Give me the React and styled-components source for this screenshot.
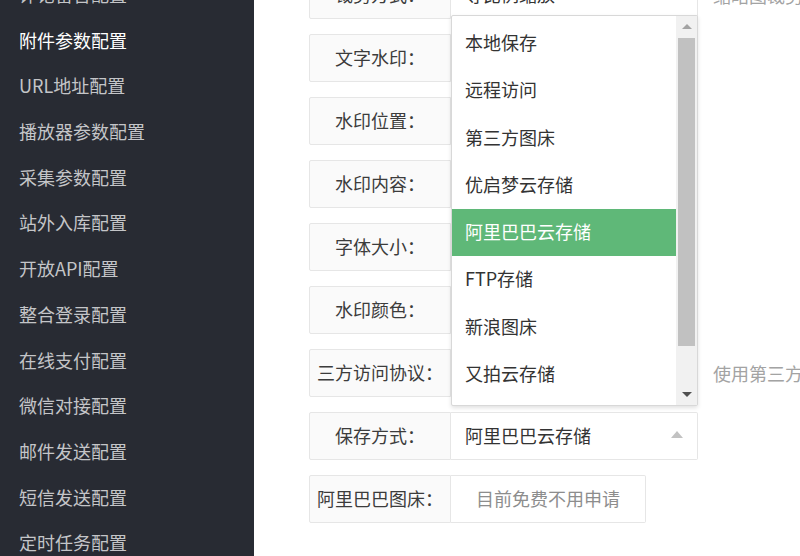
import React from 'react';
import styled, { createGlobalStyle } from 'styled-components';

const GlobalStyle = createGlobalStyle`
  html, body {
    margin: 0;
    padding: 0;
    height: 556px;
    overflow: hidden;
    background: #fff;
    font-family: "Noto Sans CJK SC", "Noto Sans", sans-serif;
  }
`;

const Page = styled.div`
  display: flex;
  width: 800px;
  height: 556px;
  overflow: hidden;
`;

const Side = styled.aside`
  width: 254px;
  flex-shrink: 0;
  background-color: #282b33;
  overflow: hidden;
`;

const NavList = styled.ul`
  list-style: none;
  margin: -28px 0 0;
  padding: 0;
`;

const NavItem = styled.li`
  height: 45.7px;
  line-height: 45.7px;
  padding-left: 19px;
  font-size: 18px;
  color: ${(p) => (p.$active ? '#ffffff' : '#c4c5c8')};
  white-space: nowrap;
`;

const Main = styled.main`
  flex: 1;
  padding-left: 55px;
  overflow: hidden;
`;

const Form = styled.div`
  display: flex;
  flex-direction: column;
  gap: 15px;
  margin-top: -29px;
`;

const Row = styled.div`
  display: flex;
  align-items: center;
  height: 48px;
`;

const Label = styled.label`
  flex-shrink: 0;
  width: 142px;
  height: 48px;
  box-sizing: border-box;
  border: 1px solid #e6e6e6;
  border-radius: 2px 0 0 2px;
  background-color: #fafafa;
  color: #3c3c3c;
  font-size: 18px;
  line-height: 45px;
  text-align: center;
  white-space: nowrap;
`;

const Field = styled.div`
  position: relative;
  flex-shrink: 0;
  width: ${(p) => p.$width || 247}px;
  height: 48px;
  box-sizing: border-box;
  border: 1px solid #e6e6e6;
  border-left: none;
  border-radius: 0 2px 2px 0;
  background-color: #fff;
  color: ${(p) => (p.$placeholder ? '#8d8d8d' : '#333')};
  font-size: 18px;
  line-height: 45px;
  padding-left: 14px;
  text-align: ${(p) => (p.$center ? 'center' : 'left')};
  padding-right: ${(p) => (p.$center ? '14px' : '0')};
  white-space: nowrap;
`;

const Caret = styled.i`
  position: absolute;
  right: 14px;
  top: 50%;
  width: 0;
  height: 0;
  border-left: 6px solid transparent;
  border-right: 6px solid transparent;
  ${(p) =>
    p.$up
      ? 'border-bottom: 7px solid #c2c2c2; margin-top: -5px;'
      : 'border-top: 7px solid #c2c2c2; margin-top: -3px;'}
`;

const Aux = styled.div`
  margin-left: 15px;
  color: #a3a3a3;
  font-size: 18px;
  white-space: nowrap;
`;

const Dropdown = styled.div`
  position: absolute;
  left: 0;
  bottom: calc(100% + 7px);
  z-index: 10;
  width: 247px;
  height: 391px;
  box-sizing: border-box;
  display: flex;
  border: 1px solid #d8d8d8;
  border-radius: 2px;
  background-color: #fff;
  box-shadow: 0 2px 4px rgba(0, 0, 0, 0.12);
`;

const Options = styled.dl`
  flex: 1;
  margin: 0;
  padding: 4px 0 0;
  overflow: hidden;
`;

const Option = styled.dd`
  margin: 0;
  height: 47.25px;
  line-height: 45px;
  padding-left: 13px;
  font-size: 18px;
  white-space: nowrap;
  color: ${(p) => (p.$selected ? '#fff' : '#333')};
  background-color: ${(p) => (p.$selected ? '#5fb878' : 'transparent')};
`;

const Scrollbar = styled.div`
  width: 21px;
  display: flex;
  flex-direction: column;
  background-color: #f1f1f1;
`;

const ScrollButton = styled.div`
  height: 21px;
  display: flex;
  align-items: center;
  justify-content: center;

  &::before {
    content: '';
    width: 0;
    height: 0;
    border-left: 5px solid transparent;
    border-right: 5px solid transparent;
    ${(p) =>
      p.$down
        ? 'border-top: 5px solid #505050;'
        : 'border-bottom: 5px solid #a3a3a3;'}
  }
`;

const Track = styled.div`
  flex: 1;
  padding: 1px 2px 0;
`;

const Thumb = styled.div`
  height: 308px;
  background-color: #c1c1c1;
`;

const menu = [
  '评论留言配置',
  '附件参数配置',
  'URL地址配置',
  '播放器参数配置',
  '采集参数配置',
  '站外入库配置',
  '开放API配置',
  '整合登录配置',
  '在线支付配置',
  '微信对接配置',
  '邮件发送配置',
  '短信发送配置',
  '定时任务配置',
];

const storage = [
  '本地保存',
  '远程访问',
  '第三方图床',
  '优启梦云存储',
  '阿里巴巴云存储',
  'FTP存储',
  '新浪图床',
  '又拍云存储',
];

const plainRows = ['文字水印：', '水印位置：', '水印内容：', '字体大小：', '水印颜色：'];

function App() {
  return (
    <>
      <GlobalStyle />
      <Page>
        <Side>
          <NavList>
            {menu.map((m) => (
              <NavItem key={m} $active={m === '附件参数配置'}>
                {m}
              </NavItem>
            ))}
          </NavList>
        </Side>
        <Main>
          <Form>
            <Row>
              <Label>裁剪方式：</Label>
              <Field>
                等比例缩放
                <Caret />
              </Field>
              <Aux>缩略图裁剪方式</Aux>
            </Row>
            {plainRows.map((r) => (
              <Row key={r}>
                <Label>{r}</Label>
                <Field />
              </Row>
            ))}
            <Row>
              <Label>三方访问协议：</Label>
              <Field />
              <Aux>使用第三方图床时的访问协议</Aux>
            </Row>
            <Row>
              <Label>保存方式：</Label>
              <Field>
                阿里巴巴云存储
                <Caret $up />
                <Dropdown>
                  <Options>
                    {storage.map((s) => (
                      <Option key={s} $selected={s === '阿里巴巴云存储'}>
                        {s}
                      </Option>
                    ))}
                  </Options>
                  <Scrollbar>
                    <ScrollButton />
                    <Track>
                      <Thumb />
                    </Track>
                    <ScrollButton $down />
                  </Scrollbar>
                </Dropdown>
              </Field>
            </Row>
            <Row>
              <Label>阿里巴巴图床：</Label>
              <Field $width={195} $center $placeholder>
                目前免费不用申请
              </Field>
            </Row>
          </Form>
        </Main>
      </Page>
    </>
  );
}

export default App;
